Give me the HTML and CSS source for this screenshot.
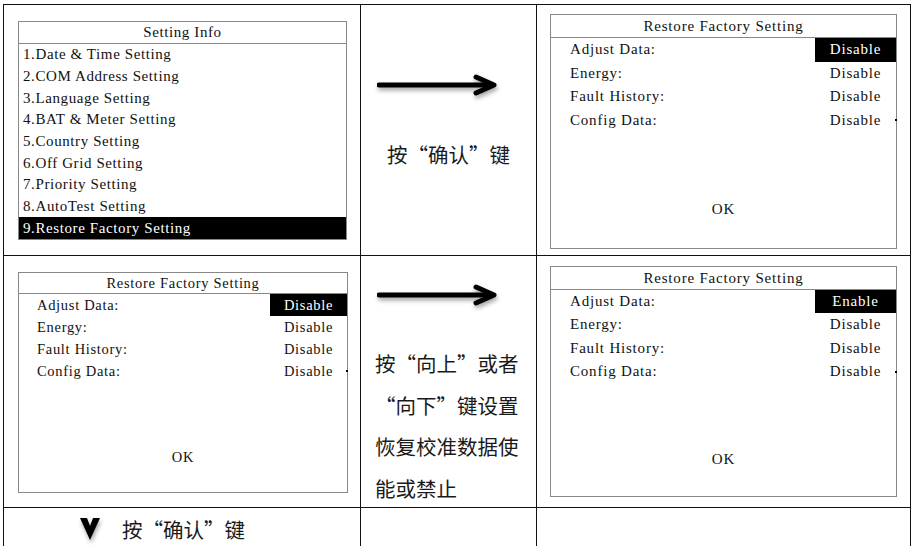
FILE: index.html
```html
<!DOCTYPE html>
<html lang="zh-CN">
<head>
    <meta charset="UTF-8">
    <meta name="viewport" content="width=device-width, initial-scale=1.0">
    <title>Restore Factory Setting</title>
    <link rel="stylesheet" href="styles.css">
</head>
<body>
<div class="sheet">
    <!-- row 1 -->
    <div class="cell">
        <div class="screen menu">
            <div class="title">Setting Info</div>
            <ul class="items">
                <li>1.Date &amp; Time Setting</li>
                <li>2.COM Address Setting</li>
                <li>3.Language Setting</li>
                <li>4.BAT &amp; Meter Setting</li>
                <li>5.Country Setting</li>
                <li>6.Off Grid Setting</li>
                <li>7.Priority Setting</li>
                <li>8.AutoTest Setting</li>
                <li class="active">9.Restore Factory Setting</li>
            </ul>
        </div>
    </div>
    <div class="cell step step-one">
        <svg class="arrow" width="122" height="26" viewBox="0 0 122 26">
            <path d="M2 13 H114" stroke="#000" stroke-width="5" stroke-linecap="round"/>
            <path d="M99 5 L117 13 L99 21" fill="none" stroke="#000" stroke-width="5" stroke-linecap="round" stroke-linejoin="round"/>
        </svg>
        <p class="note center">按“确认”键</p>
    </div>
    <div class="cell">
        <div class="screen restore wide first">
            <div class="title">Restore Factory Setting</div>
            <div class="row"><span>Adjust Data:</span><span class="val active">Disable</span></div>
            <div class="row"><span>Energy:</span><span class="val">Disable</span></div>
            <div class="row"><span>Fault History:</span><span class="val">Disable</span></div>
            <div class="row"><span>Config Data:</span><span class="val">Disable</span><i class="dot"></i></div>
            <div class="ok">OK</div>
        </div>
    </div>

    <!-- row 2 -->
    <div class="cell">
        <div class="screen restore narrow">
            <div class="title">Restore Factory Setting</div>
            <div class="row"><span>Adjust Data:</span><span class="val active">Disable</span></div>
            <div class="row"><span>Energy:</span><span class="val">Disable</span></div>
            <div class="row"><span>Fault History:</span><span class="val">Disable</span></div>
            <div class="row"><span>Config Data:</span><span class="val">Disable</span><i class="dot"></i></div>
            <div class="ok">OK</div>
        </div>
    </div>
    <div class="cell step step-two">
        <svg class="arrow" width="122" height="26" viewBox="0 0 122 26">
            <path d="M2 13 H114" stroke="#000" stroke-width="5" stroke-linecap="round"/>
            <path d="M99 5 L117 13 L99 21" fill="none" stroke="#000" stroke-width="5" stroke-linecap="round" stroke-linejoin="round"/>
        </svg>
        <p class="note wrap">按“向上”或者“向下”键设置恢复校准数据使能或禁止</p>
    </div>
    <div class="cell">
        <div class="screen restore wide second">
            <div class="title">Restore Factory Setting</div>
            <div class="row"><span>Adjust Data:</span><span class="val active">Enable</span></div>
            <div class="row"><span>Energy:</span><span class="val">Disable</span></div>
            <div class="row"><span>Fault History:</span><span class="val">Disable</span></div>
            <div class="row"><span>Config Data:</span><span class="val">Disable</span><i class="dot"></i></div>
            <div class="ok">OK</div>
        </div>
    </div>

    <!-- row 3 -->
    <div class="cell next">
        <svg class="down" width="20" height="22" viewBox="0 0 20 22">
            <path d="M0 0 L7 0 L10 8 L13 0 L20 0 L10 22 Z" fill="#000"/>
        </svg>
        <span class="note">按“确认”键</span>
    </div>
    <div class="cell"></div>
    <div class="cell"></div>
</div>
</body>
</html>
```

FILE: styles.css
```css
body {
    margin: 0;
    background: #fff;
    overflow: hidden;
}
.sheet {
    margin: 4px 0 0 3px;
    display: grid;
    grid-template-columns: 357px 176px 374px;
    grid-template-rows: 251px 252px 60px;
    border-top: 1px solid #111;
    border-left: 1px solid #111;
}
.cell {
    box-sizing: border-box;
    border-right: 1px solid #111;
    border-bottom: 1px solid #111;
    min-width: 0;
}

/* LCD screens */
.screen {
    box-sizing: border-box;
    border: 1px solid #888;
    display: flex;
    flex-direction: column;
    font-family: 'Liberation Serif', serif;
    font-size: 15px;
    letter-spacing: 0.8px;
    color: #111;
}
.screen .title {
    text-align: center;
    border-bottom: 1px solid #888;
    display: flex;
    align-items: center;
    justify-content: center;
}
.menu {
    width: 329px;
    height: 219px;
    margin: 16px 0 0 14px;
    letter-spacing: 0.6px;
}
.menu .title {
    height: 21px;
}
.items {
    list-style: none;
    margin: 0;
    padding: 0;
    flex: 1;
    display: flex;
    flex-direction: column;
}
.items li {
    flex: 1;
    display: flex;
    align-items: center;
    padding-left: 4px;
}
.items li.active {
    background: #000;
    color: #fff;
}

.restore .title {
    height: 22px;
}
.restore .row {
    position: relative;
    display: flex;
    align-items: center;
    justify-content: space-between;
    height: 23.5px;
    padding-left: 19px;
}
.restore .val {
    width: 81px;
    height: 100%;
    display: flex;
    align-items: center;
    justify-content: center;
}
.restore .val.active {
    background: #000;
    color: #fff;
}
.dot {
    position: absolute;
    right: -1px;
    top: 50%;
    width: 2px;
    height: 2px;
    margin-top: -1px;
    background: #000;
}
.restore .ok {
    margin-top: auto;
    margin-bottom: 28px;
    height: 22px;
    display: flex;
    align-items: center;
    justify-content: center;
}
.wide {
    width: 347px;
    margin-left: 13px;
}
.wide.first {
    height: 235px;
    margin-top: 9px;
}
.wide.second {
    height: 231px;
    margin-top: 10px;
}
.wide.second .row {
    height: 23.3px;
}
.wide.second .ok {
    margin-bottom: 26px;
}
.narrow {
    width: 330px;
    height: 221px;
    margin: 16px 0 0 14px;
    font-size: 14.5px;
    letter-spacing: 0.7px;
}
.narrow .title {
    height: 20px;
}
.narrow .row {
    height: 22px;
    padding-left: 18px;
}
.narrow .val {
    width: 77px;
}
.narrow .ok {
    margin-bottom: 24px;
}

/* step descriptions */
.note {
    font-family: 'Noto Sans CJK SC', 'Noto Sans', sans-serif;
    font-size: 20.5px;
    color: #1a1a1a;
    margin: 0;
}
.step {
    display: flex;
    flex-direction: column;
    overflow: hidden;
}
.arrow {
    display: block;
    flex-shrink: 0;
    margin-left: 16px;
    filter: drop-shadow(1px 3px 2px rgba(0, 0, 0, 0.35));
}
.step-one .arrow {
    margin-top: 67px;
}
.step-one .center {
    margin-top: 42px;
    line-height: 28px;
    text-align: center;
}
.step-two .arrow {
    margin-top: 26px;
}
.step-two .wrap {
    flex-shrink: 0;
    margin: 35px 0 0 14px;
    width: 146px;
    line-height: 41.7px;
}

.next {
    display: flex;
    align-items: flex-start;
    padding: 9px 0 0 76px;
    gap: 22px;
}
.down {
    margin-top: 1px;
    filter: drop-shadow(1px 3px 2px rgba(0, 0, 0, 0.35));
}
.next .note {
    line-height: 24px;
}
```
